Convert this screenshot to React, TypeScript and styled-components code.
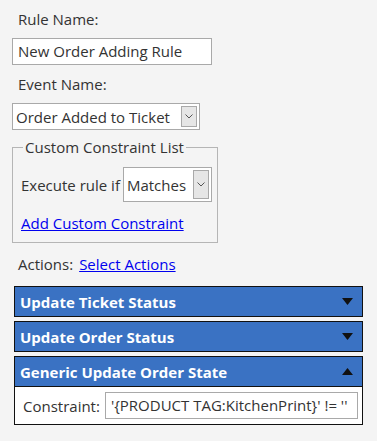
import React from 'react';
import styled, { createGlobalStyle } from 'styled-components';

const GlobalStyle = createGlobalStyle`
  body {
    margin: 0;
    background: #f4f4f4;
    font-family: "Open Sans", "Noto Sans", sans-serif;
    font-size: 15px;
    color: #333;
  }
`;

const Page = styled.div`
  padding: 8px 12px 0 12px;
  width: 351px;
`;

const Label = styled.div`
  height: 22px;
  line-height: 22px;
  padding-left: 6px;
  margin-bottom: 8px;
`;

const TextInput = styled.div<{ width: number; gapBelow?: number }>`
  box-sizing: border-box;
  width: ${p => p.width}px;
  height: 27px;
  line-height: 25px;
  background: #fff;
  border: 1px solid #a9a9a9;
  padding-left: 5px;
  margin-bottom: ${p => p.gapBelow ?? 0}px;
  white-space: nowrap;
  overflow: hidden;
`;

const Select = styled.div<{ width: number; height: number }>`
  box-sizing: border-box;
  flex-shrink: 0;
  width: ${p => p.width}px;
  height: ${p => p.height}px;
  background: #fff;
  border: 1px solid #a9a9a9;
  display: flex;
  align-items: center;
  padding: 2px;
  padding-left: 3px;
`;

const SelectText = styled.span`
  flex: 1;
  white-space: nowrap;
`;

const DropButton = styled.span`
  box-sizing: border-box;
  width: 16px;
  align-self: stretch;
  background: #e6e6e6;
  border: 1px solid #a9a9a9;
  display: flex;
  align-items: center;
  justify-content: center;
`;

const Fieldset = styled.fieldset`
  box-sizing: border-box;
  width: 206px;
  margin: 8px 0 0 0;
  padding: 11px 0 8px 8px;
  border: 1px solid #b5b5b5;
  height: 105px;
`;

const Legend = styled.legend`
  padding: 0 2px;
  margin-left: 2px;
  line-height: 18px;
`;

const Row = styled.div`
  display: flex;
  align-items: center;
  gap: 3px;
  white-space: nowrap;
`;

const Link = styled.a`
  color: #0000ee;
  text-decoration: underline;
  cursor: pointer;
`;

const ConstraintLink = styled(Link)`
  display: block;
  margin-top: 11px;
`;

const ActionsRow = styled.div`
  display: flex;
  align-items: baseline;
  gap: 6px;
  padding-left: 6px;
  margin-top: 11px;
  height: 24px;
`;

const Panels = styled.div`
  margin-top: 8px;
  padding-left: 2px;
  display: flex;
  flex-direction: column;
  gap: 4px;
`;

const Panel = styled.div`
  box-sizing: border-box;
  width: 349px;
  border: 1.5px solid #111;
  background: #fff;
`;

const PanelHeader = styled.div`
  height: 29px;
  background: #3a72c3;
  color: #fff;
  font-weight: 700;
  font-size: 15px;
  display: flex;
  align-items: center;
  justify-content: space-between;
  padding: 0 9px 0 5px;
`;

const PanelBody = styled.div`
  display: flex;
  align-items: center;
  gap: 5px;
  padding: 5px 4px 5px 8px;
  border-top: 1px solid #111;
`;

const Caret = ({ up }: { up?: boolean }) => (
  <svg width="11" height="7" viewBox="0 0 11 7">
    <path d={up ? 'M0 7 L5.5 0 L11 7 Z' : 'M0 0 L11 0 L5.5 7 Z'} fill="#111" />
  </svg>
);

const Chevron = () => (
  <svg width="8" height="5" viewBox="0 0 8 5">
    <path d="M0.5 0.5 L4 4 L7.5 0.5" fill="none" stroke="#555" strokeWidth="1" />
  </svg>
);

const App: React.FC = () => {
  return (
    <>
      <GlobalStyle />
      <Page>
        <Label>Rule Name:</Label>
        <TextInput width={200} gapBelow={8}>New Order Adding Rule</TextInput>
        <Label>Event Name:</Label>
        <Select width={188} height={27}>
          <SelectText>Order Added to Ticket</SelectText>
          <DropButton><Chevron /></DropButton>
        </Select>
        <Fieldset>
          <Legend>Custom Constraint List</Legend>
          <Row>
            <span>Execute rule if</span>
            <Select width={89} height={35}>
              <SelectText>Matches</SelectText>
              <DropButton><Chevron /></DropButton>
            </Select>
          </Row>
          <ConstraintLink>Add Custom Constraint</ConstraintLink>
        </Fieldset>
        <ActionsRow>
          <span>Actions:</span>
          <Link>Select Actions</Link>
        </ActionsRow>
        <Panels>
          <Panel>
            <PanelHeader>Update Ticket Status<Caret /></PanelHeader>
          </Panel>
          <Panel>
            <PanelHeader>Update Order Status<Caret /></PanelHeader>
          </Panel>
          <Panel>
            <PanelHeader>Generic Update Order State<Caret up /></PanelHeader>
            <PanelBody>
              <span>Constraint:</span>
              <TextInput width={255}>'{'{'}PRODUCT TAG:KitchenPrint{'}'}' != ''</TextInput>
            </PanelBody>
          </Panel>
        </Panels>
      </Page>
    </>
  );
};

export default App;
